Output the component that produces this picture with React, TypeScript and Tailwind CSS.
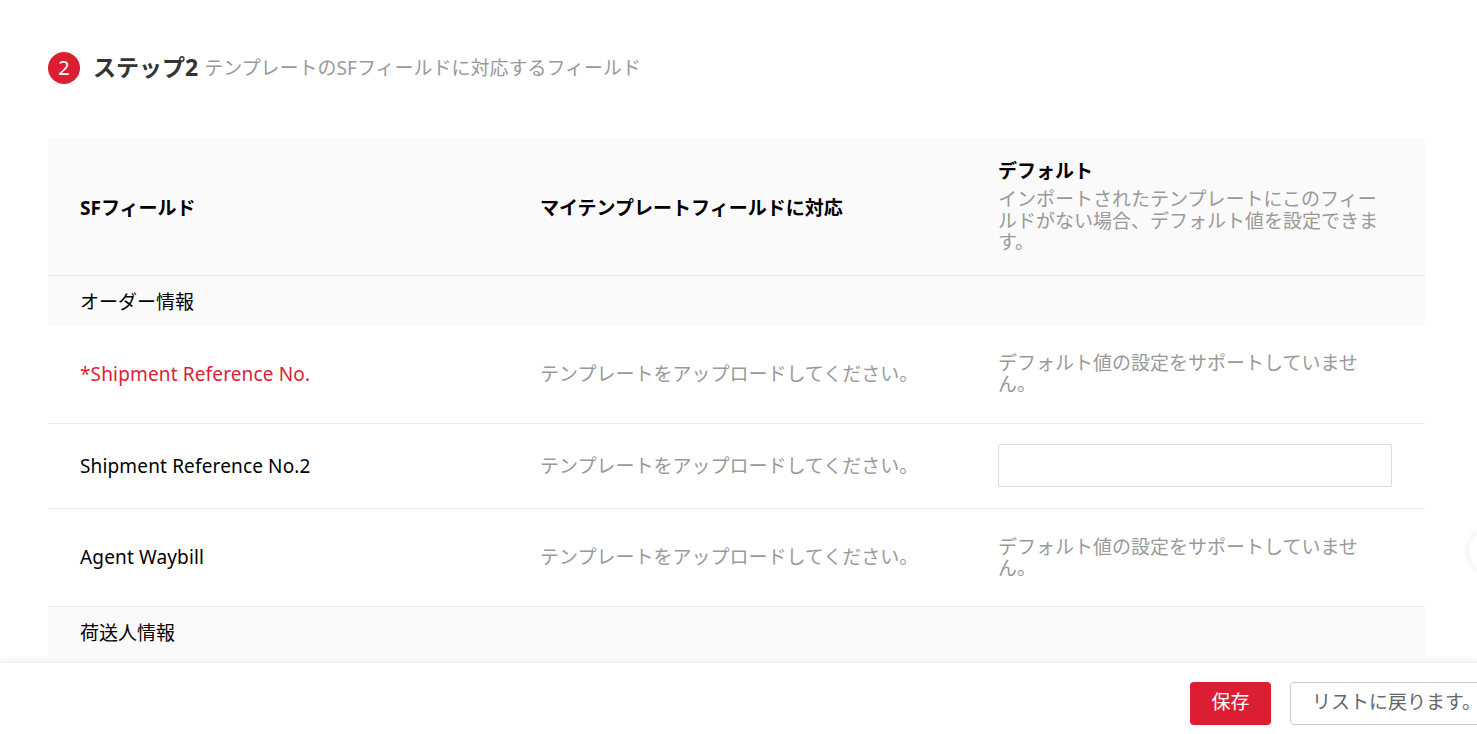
const FONT = "font-['Noto_Sans','Noto_Sans_CJK_JP',sans-serif]";

const NO_TEMPLATE = 'テンプレートをアップロードしてください。';
const NO_DEFAULT = 'デフォルト値の設定をサポートしていません。';

function GroupRow({ label }: { label: string }) {
  return (
    <div className="flex h-[49px] items-center bg-[#fafafa] pl-8 pt-[3px] text-[19px] leading-[21px] text-black">
      {label}
    </div>
  );
}

function FieldRow({ name, required, hasInput, height }: { name: string; required?: boolean; hasInput?: boolean; height: string }) {
  return (
    <div className={`grid grid-cols-[460px_458px_459px] items-center border-b border-[#e8e8e8] ${height}`}>
      <div className={`pl-8 text-[19px] leading-[21px] tracking-[0.15px] ${required ? 'text-[#dc1e32]' : 'text-black'}`}>{name}</div>
      <div className="pl-8 text-[19px] leading-[21px] text-[#999]">{NO_TEMPLATE}</div>
      <div className="pl-8 pr-[33px]">
        {hasInput ? (
          <input className="mb-[2px] block h-[43px] w-full rounded-[2px] border border-[#dcdcdc] bg-white" />
        ) : (
          <p className="pr-2 text-[19px] leading-[21px] text-[#999]">{NO_DEFAULT}</p>
        )}
      </div>
    </div>
  );
}

export default function App() {
  return (
    <div className={`relative flex h-[734px] w-[1477px] flex-col overflow-hidden bg-white ${FONT}`}>
      <div className="min-h-0 flex-1 overflow-hidden px-12 pt-[50px]">
        {/* Step title */}
        <div className="flex h-[36px] items-center">
          <span className="flex h-8 w-8 items-center justify-center rounded-full bg-[#dc1e32] text-[20px] text-white">2</span>
          <span className="mb-[3px] ml-[13px] text-[23px] font-bold leading-8 text-[#333]">ステップ2</span>
          <span className="mb-px ml-[6px] text-[19px] leading-8 text-[#999]">テンプレートのSFフィールドに対応するフィールド</span>
        </div>

        {/* Mapping table */}
        <div className="mt-[52px] w-[1377px]">
          <div className="grid h-[138px] grid-cols-[460px_458px_459px] items-center border-b border-[#e8e8e8] bg-[#fafafa] pt-[3px] text-[19px] font-bold leading-[21px] text-black">
            <div className="pl-8">SFフィールド</div>
            <div className="pl-8">マイテンプレートフィールドに対応</div>
            <div className="pb-px pl-8 pr-[46px]">
              <div className="mb-[7px]">デフォルト</div>
              <div className="font-normal leading-[21.5px] text-[#999]">インポートされたテンプレートにこのフィールドがない場合、デフォルト値を設定できます。</div>
            </div>
          </div>
          <GroupRow label="オーダー情報" />
          <FieldRow name="*Shipment Reference No." required height="h-[99px]" />
          <FieldRow name="Shipment Reference No.2" hasInput height="h-[85px]" />
          <FieldRow name="Agent Waybill" height="h-[98px]" />
          <GroupRow label="荷送人情報" />
        </div>
      </div>

      {/* Floating handle at the window edge */}
      <div className="absolute left-[1469px] top-[529px] h-11 w-11 rounded-full bg-white shadow-[0_0_8px_rgba(0,0,0,0.1)]" />

      {/* Footer */}
      <div className="flex h-[72px] shrink-0 items-start gap-[19px] border-t border-[#eeeef0] bg-white pl-[1190px] pt-[19px] shadow-[0_-3px_6px_rgba(0,0,0,0.05)]">
        <button className="h-[43px] w-[81px] shrink-0 rounded-[4px] bg-[#dc1e32] pb-[3px] text-[19px] text-white">保存</button>
        <button className="h-[43px] w-[210px] shrink-0 rounded-[4px] border border-[#ccc] bg-white pb-[3px] pl-[21px] text-left text-[19px] text-[#666]">リストに戻ります。</button>
      </div>
    </div>
  );
}
